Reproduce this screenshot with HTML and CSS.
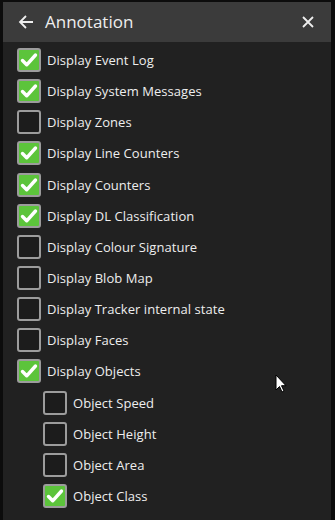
FILE: index.html
```html
<!DOCTYPE html>
<html>
<head>
<meta charset="utf-8">
<link rel="stylesheet" href="styles.css">
</head>
<body>
<div class="frame">
  <div class="panel">
    <div class="header">
      <svg class="back" width="16" height="16" viewBox="0 0 16 16"><path d="M15 8H2M8 2L2 8l6 6" fill="none" stroke="#eee" stroke-width="1.8"/></svg>
      <span class="title">Annotation</span>
      <svg class="close" width="14" height="14" viewBox="0 0 14 14"><path d="M2 2l10 10M12 2L2 12" fill="none" stroke="#eee" stroke-width="1.8"/></svg>
    </div>
    <div class="list">
      <div class="row"><span class="box on"><svg class="tick" viewBox="0 0 20 20"><path d="M3.5 10.5l4.2 4.3L16.5 5"/></svg></span><span class="label">Display Event Log</span></div>
      <div class="row"><span class="box on"><svg class="tick" viewBox="0 0 20 20"><path d="M3.5 10.5l4.2 4.3L16.5 5"/></svg></span><span class="label">Display System Messages</span></div>
      <div class="row"><span class="box"></span><span class="label">Display Zones</span></div>
      <div class="row"><span class="box on"><svg class="tick" viewBox="0 0 20 20"><path d="M3.5 10.5l4.2 4.3L16.5 5"/></svg></span><span class="label">Display Line Counters</span></div>
      <div class="row"><span class="box on"><svg class="tick" viewBox="0 0 20 20"><path d="M3.5 10.5l4.2 4.3L16.5 5"/></svg></span><span class="label">Display Counters</span></div>
      <div class="row"><span class="box on"><svg class="tick" viewBox="0 0 20 20"><path d="M3.5 10.5l4.2 4.3L16.5 5"/></svg></span><span class="label">Display DL Classification</span></div>
      <div class="row"><span class="box"></span><span class="label">Display Colour Signature</span></div>
      <div class="row"><span class="box"></span><span class="label">Display Blob Map</span></div>
      <div class="row"><span class="box"></span><span class="label">Display Tracker internal state</span></div>
      <div class="row"><span class="box"></span><span class="label">Display Faces</span></div>
      <div class="row"><span class="box on"><svg class="tick" viewBox="0 0 20 20"><path d="M3.5 10.5l4.2 4.3L16.5 5"/></svg></span><span class="label">Display Objects</span></div>
      <div class="row sub"><span class="box"></span><span class="label">Object Speed</span></div>
      <div class="row sub"><span class="box"></span><span class="label">Object Height</span></div>
      <div class="row sub"><span class="box"></span><span class="label">Object Area</span></div>
      <div class="row sub"><span class="box on"><svg class="tick" viewBox="0 0 20 20"><path d="M3.5 10.5l4.2 4.3L16.5 5"/></svg></span><span class="label">Object Class</span></div>
    </div>
  </div>
  <svg class="cursor" width="13" height="20" viewBox="0 0 13 20"><path d="M1 1v15l3.5-3.5 2.5 5.5 2-1-2.5-5.3H11z" fill="#fff" stroke="#000" stroke-width="1"/></svg>
</div>
</body>
</html>
```
FILE: styles.css
```css
html, body {
  margin: 0;
  padding: 0;
  background: #111;
}
.frame {
  position: relative;
  width: 335px;
  height: 520px;
  background: #0c0c0c;
  padding: 2px 3px 0 3px;
  box-sizing: border-box;
  overflow: hidden;
}
.panel {
  width: 328px;
  height: 518px;
  background: #212121;
  font-family: "Open Sans", "Noto Sans", sans-serif;
  color: #eeeeee;
}
.header {
  height: 40px;
  background: #3b3b3b;
  display: flex;
  align-items: center;
  padding: 0 0 0 15px;
}
.back {
  margin-right: 11px;
}
.title {
  font-size: 17px;
  flex: 1;
  position: relative;
  top: -1px;
}
.close {
  margin-right: 16px;
}
.list {
  padding-top: 2.5px;
}
.row {
  height: 31.15px;
  display: flex;
  align-items: center;
  padding-left: 14px;
}
.row.sub {
  padding-left: 40px;
}
.box {
  width: 24px;
  height: 24px;
  box-sizing: border-box;
  border: 2px solid #9c9c9c;
  border-radius: 3px;
  background: #1c1c1c;
  margin-right: 6px;
  flex: none;
  display: flex;
}
.box.on {
  background: #5cc43b;
}
.tick {
  width: 20px;
  height: 20px;
  fill: none;
  stroke: #fff;
  stroke-width: 3.4;
  stroke-linecap: round;
  stroke-linejoin: round;
}
.label {
  font-size: 13px;
  line-height: 18px;
  letter-spacing: 0.05px;
}
.cursor {
  position: absolute;
  left: 275px;
  top: 374px;
}
```
